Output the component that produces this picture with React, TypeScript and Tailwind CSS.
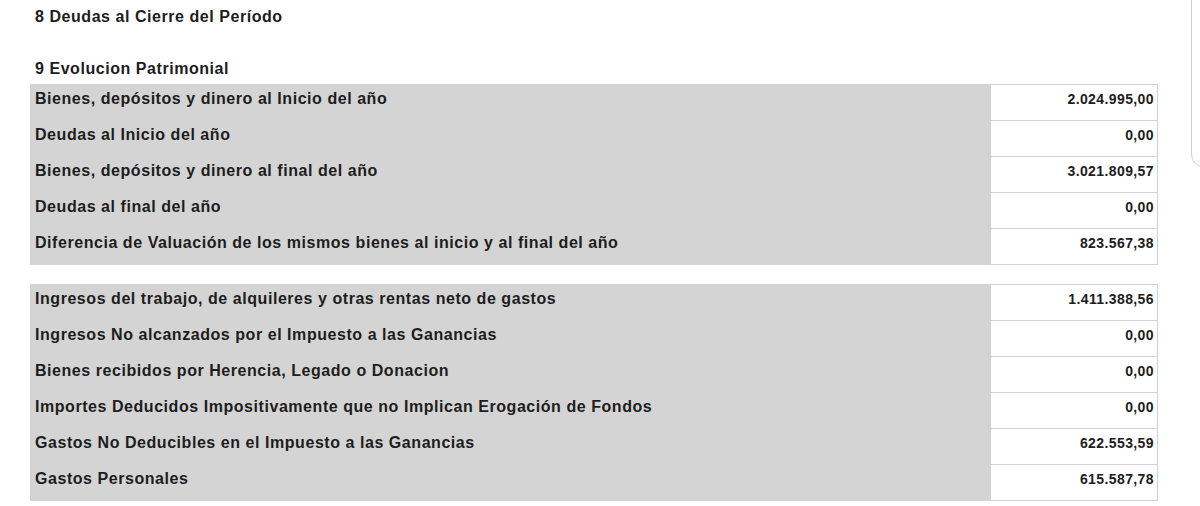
const bloqueUno = [
  { label: 'Bienes, depósitos y dinero al Inicio del año', value: '2.024.995,00' },
  { label: 'Deudas al Inicio del año', value: '0,00' },
  { label: 'Bienes, depósitos y dinero al final del año', value: '3.021.809,57' },
  { label: 'Deudas al final del año', value: '0,00' },
  { label: 'Diferencia de Valuación de los mismos bienes al inicio y al final del año', value: '823.567,38' },
];

const bloqueDos = [
  { label: 'Ingresos del trabajo, de alquileres y otras rentas neto de gastos', value: '1.411.388,56' },
  { label: 'Ingresos No alcanzados por el Impuesto a las Ganancias', value: '0,00' },
  { label: 'Bienes recibidos por Herencia, Legado o Donacion', value: '0,00' },
  { label: 'Importes Deducidos Impositivamente que no Implican Erogación de Fondos', value: '0,00' },
  { label: 'Gastos No Deducibles en el Impuesto a las Ganancias', value: '622.553,59' },
  { label: 'Gastos Personales', value: '615.587,78' },
];

type Fila = { label: string; value: string };

function Bloque({ rows }: { rows: Fila[] }) {
  return (
    <div className="flex flex-col w-[1128px]">
      {rows.map((row, i) => {
        const last = i === rows.length - 1;
        return (
          <div key={row.label} className={`flex ${last ? 'h-[37px]' : 'h-[36px]'}`}>
            <div className="flex-1 bg-[#d4d4d4] pl-[5px] pt-[6px] text-[16px] leading-[18px] font-bold tracking-[0.55px] text-[#1d1d1d]">
              {row.label}
            </div>
            <div
              className={`w-[168px] bg-white border-l border-r border-t border-[#d2d2d2] ${
                last ? 'border-b' : ''
              } pr-[3px] pt-[5px] text-right text-[14px] leading-[18px] font-bold tracking-[0.4px] text-[#1d1d1d]`}
            >
              {row.value}
            </div>
          </div>
        );
      })}
    </div>
  );
}

export default function App() {
  return (
    <main
      className="relative w-[1200px] h-[506px] overflow-hidden bg-white pl-[30px] pt-[8px]"
      style={{ fontFamily: '"Liberation Sans", Arial, sans-serif' }}
    >
      <h2 className="pl-[5px] text-[16px] leading-[18px] font-bold tracking-[0.55px] text-[#1d1d1d]">
        8 Deudas al Cierre del Período
      </h2>
      <h2 className="mt-[34px] pl-[5px] text-[16px] leading-[18px] font-bold tracking-[0.55px] text-[#1d1d1d]">
        9 Evolucion Patrimonial
      </h2>

      <div className="mt-[6px]">
        <Bloque rows={bloqueUno} />
      </div>
      <div className="mt-[19px]">
        <Bloque rows={bloqueDos} />
      </div>

      {/* borde del panel lateral */}
      <div className="absolute left-[1191px] top-[-10px] w-[30px] h-[178px] border border-[#cfcfcf] rounded-bl-[14px]" />
    </main>
  );
}
